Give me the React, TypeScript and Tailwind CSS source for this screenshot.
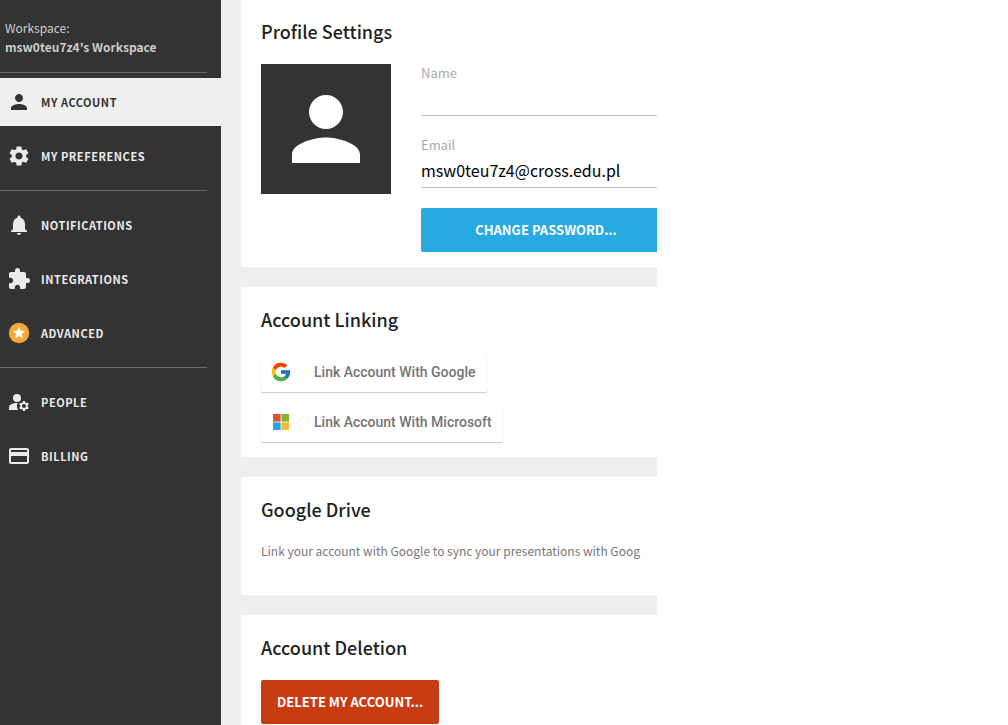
import type { ReactNode } from 'react';
import { FcGoogle } from 'react-icons/fc';
import {
  MdCreditCard,
  MdExtension,
  MdManageAccounts,
  MdNotifications,
  MdPerson,
  MdSettings,
} from 'react-icons/md';

// Icons
function AdvancedIcon() {
  return (
    <svg className="size-6" viewBox="0 0 24 24">
      <circle cx="12" cy="12" r="10.2" fill="#f4a938" />
      <path
        d="M12 5.4l1.7 4.3 4.6.3-3.6 2.9 1.2 4.5-3.9-2.5-3.9 2.5 1.2-4.5L5.7 10l4.6-.3z"
        fill="white"
      />
    </svg>
  );
}

function MicrosoftIcon() {
  return (
    <svg className="size-4" viewBox="0 0 16 16">
      <path d="M0 0h7.6v7.6H0z" fill="#e0532c" />
      <path d="M8.4 0H16v7.6H8.4z" fill="#80b52c" />
      <path d="M0 8.4h7.6V16H0z" fill="#2b9fe0" />
      <path d="M8.4 8.4H16V16H8.4z" fill="#f8b833" />
    </svg>
  );
}

// Sidebar
function NavItem({ icon, label, active }: { icon: ReactNode; label: string; active?: boolean }) {
  return (
    <a
      href="#"
      className={
        active
          ? 'flex h-12 items-center gap-[10px] bg-[#efefef] pl-[7px] text-[#333333]'
          : 'flex h-12 items-center gap-[10px] pl-[7px] text-[#ebebeb]'
      }
    >
      {icon}
      <span className="text-[11px] font-bold tracking-wider uppercase">{label}</span>
    </a>
  );
}

function Divider() {
  return <hr className="mr-[14px] border-t border-[#6b6b6b]" />;
}

function Sidebar() {
  return (
    <aside className="w-[221px] shrink-0 bg-[#333333]">
      <div className="px-[5px] pt-[18px] pb-4 text-[12px] leading-[19px] text-[#cccccc]">
        <div>Workspace:</div>
        <div className="font-bold">msw0teu7z4's Workspace</div>
      </div>
      <Divider />
      <nav>
        <div className="flex flex-col gap-[6px] pt-[5px] pb-[10px]">
          <NavItem active icon={<MdPerson className="size-6" />} label="My Account" />
          <NavItem icon={<MdSettings className="size-6" />} label="My Preferences" />
        </div>
        <Divider />
        <div className="flex flex-col gap-[6px] py-[10px]">
          <NavItem icon={<MdNotifications className="size-6" />} label="Notifications" />
          <NavItem icon={<MdExtension className="size-6" />} label="Integrations" />
          <NavItem icon={<AdvancedIcon />} label="Advanced" />
        </div>
        <Divider />
        <div className="flex flex-col gap-[6px] py-[10px]">
          <NavItem icon={<MdManageAccounts className="size-6" />} label="People" />
          <NavItem icon={<MdCreditCard className="size-6" />} label="Billing" />
        </div>
      </nav>
    </aside>
  );
}

// Content
function Card({ title, children }: { title: string; children: ReactNode }) {
  return (
    <section className="shrink-0 bg-white pt-[18px] pb-[15px] pl-5 first:pt-[17px]">
      <h2 className="mb-[19px] text-[18px] leading-7 font-medium text-[#222222]">{title}</h2>
      {children}
    </section>
  );
}

function Field({ id, label, type, value }: { id: string; label: string; type: string; value: string }) {
  return (
    <div className="flex flex-col">
      <label htmlFor={id} className="text-[13px] leading-[18px] text-[#aaaaaa]">{label}</label>
      <input
        id={id}
        type={type}
        defaultValue={value}
        className="h-[34px] border-b border-[#c4c4c4] pb-[2px] text-[16px] text-black outline-none"
      />
    </div>
  );
}

function LinkButton({ icon, label }: { icon: ReactNode; label: string }) {
  return (
    <button className="flex h-10 items-center gap-[22px] rounded-[2px] bg-white pr-[11px] pl-[9px] font-[Roboto,sans-serif] text-[14px] font-medium text-[#757575] shadow-[0_1px_1px_rgba(0,0,0,0.22)]">
      <span className="flex w-[22px] justify-center">{icon}</span>
      {label}
    </button>
  );
}

export default function App() {
  return (
    <div className="flex h-screen overflow-hidden bg-white font-['Noto_Sans_CJK_SC','Noto_Sans',sans-serif]">
      <Sidebar />
      <main className="flex max-w-[436px] flex-1 flex-col gap-5 overflow-hidden bg-[#eeeeee] pl-5">
        <Card title="Profile Settings">
          <div className="flex gap-[30px]">
            <div className="flex size-[130px] shrink-0 items-center justify-center bg-[#333333]">
              <MdPerson className="size-[102px] text-white" />
            </div>
            <div className="flex w-[250px] shrink-0 flex-col gap-5">
              <Field id="name" label="Name" type="text" value="" />
              <Field id="email" label="Email" type="email" value="msw0teu7z4@cross.edu.pl" />
              <button className="h-11 rounded-[2px] bg-[#29a9e1] text-[13px] font-bold text-white uppercase">
                Change Password...
              </button>
            </div>
          </div>
        </Card>
        <Card title="Account Linking">
          <div className="flex flex-col items-start gap-[10px]">
            <LinkButton icon={<FcGoogle className="size-[22px]" />} label="Link Account With Google" />
            <LinkButton icon={<MicrosoftIcon />} label="Link Account With Microsoft" />
          </div>
        </Card>
        <Card title="Google Drive">
          <p className="mb-5 text-[12px] leading-[18px] whitespace-nowrap text-[#777777]">
            Link your account with Google to sync your presentations with Goog
          </p>
        </Card>
        <Card title="Account Deletion">
          <button className="h-11 rounded-[2px] bg-[#c83c14] px-4 text-[13px] font-bold text-white uppercase">
            Delete My Account...
          </button>
        </Card>
      </main>
    </div>
  );
}
